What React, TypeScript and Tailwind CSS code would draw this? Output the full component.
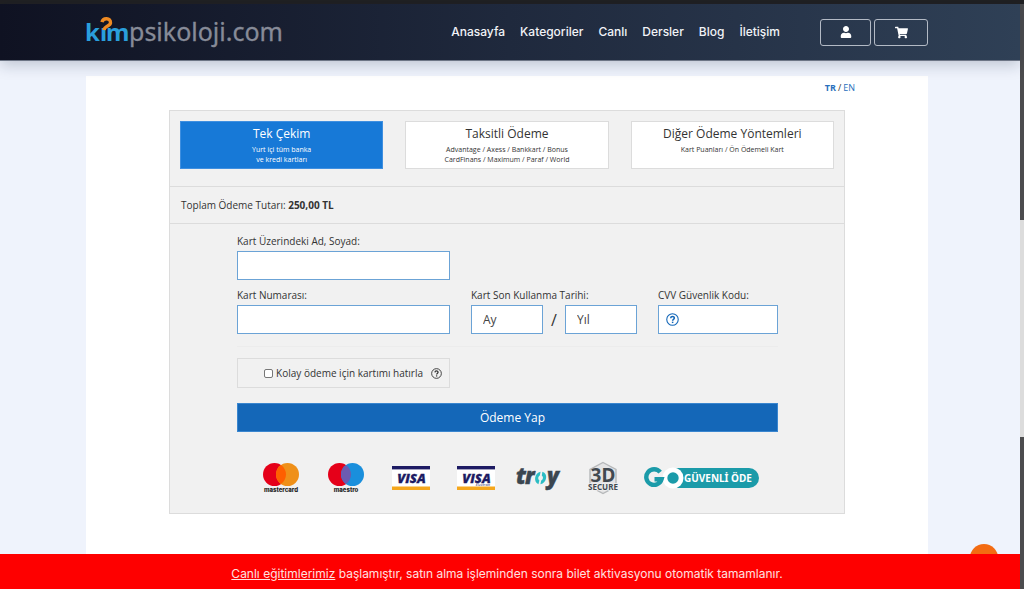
import type { ReactNode } from 'react';
import { FaShoppingCart, FaUser } from 'react-icons/fa';

const navItems = ['Anasayfa', 'Kategoriler', 'Canlı', 'Dersler', 'Blog', 'İletişim'];

const methods = [
  { title: 'Tek Çekim', lines: ['Yurt içi tüm banka', 've kredi kartları'], active: true },
  {
    title: 'Taksitli Ödeme',
    lines: ['Advantage / Axess / Bankkart / Bonus', 'CardFinans / Maximum / Paraf / World'],
    active: false,
  },
  { title: 'Diğer Ödeme Yöntemleri', lines: ['Kart Puanları / Ön Ödemeli Kart'], active: false },
];

const inputClass =
  'block h-[29px] w-full min-w-0 appearance-none border border-[#6ba3d6] bg-white px-[11px] text-[12px] text-[#444] outline-none placeholder:text-[#444] placeholder:opacity-100';

function Logo() {
  return (
    <svg width="200" height="36" viewBox="0 0 200 36" role="img" aria-label="kimpsikoloji.com">
      <g fontFamily="'Noto Sans', sans-serif">
        <g fontSize="24" fontWeight="700" fill="#2a9fdc">
          <text x="-1" y="27">k</text>
          <text x="14" y="27">ı</text>
          <text x="20" y="27">m</text>
        </g>
        <text x="43" y="27" fontSize="25" fill="#878b98" stroke="#878b98" strokeWidth="0.3">psikoloji.com</text>
      </g>
      <path d="M16 8.2C17 3.4 24.8 3.6 24.5 8.8C24.3 12.3 18.5 11.6 18 16" fill="none" stroke="#ef8a22" strokeWidth="3.4" />
    </svg>
  );
}

function HelpIcon({ className }: { className: string }) {
  return (
    <svg viewBox="0 0 12 12" className={className} fill="none" stroke="currentColor" aria-hidden="true">
      <circle cx="6" cy="6" r="5.3" strokeWidth="1" />
      <path d="M4.3 4.8C4.4 2.7 7.7 2.8 7.7 4.7C7.7 5.9 6.1 5.9 6.1 7.2" strokeWidth="1.4" />
      <path d="M6.1 8V9.3" strokeWidth="1.4" />
    </svg>
  );
}

function Circles({ label, right, overlap }: { label: string; right: string; overlap: string }) {
  return (
    <svg width="38" height="32" viewBox="0 0 38 32" role="img" aria-label={label}>
      <circle cx="12.5" cy="12.5" r="11.5" fill="#e50019" />
      <circle cx="25.5" cy="12.5" r="11.5" fill={right} />
      <path d="M19 3A11.5 11.5 0 0 1 19 22A11.5 11.5 0 0 1 19 3Z" fill={overlap} />
      <text x="19" y="30" textAnchor="middle" fontSize="6" fontWeight="800" fontFamily="Inter, sans-serif" fill="#242424">
        {label}
      </text>
    </svg>
  );
}

function Visa({ note }: { note?: string }) {
  return (
    <svg width="38" height="24" viewBox="0 0 38 24" role="img" aria-label="Visa">
      <rect width="38" height="24" fill="#fff" />
      <rect width="38" height="3.4" fill="#1d1b63" />
      <rect y="20.5" width="38" height="3.5" fill="#f5a71d" />
      <text x="19.5" y="16.5" textAnchor="middle" fontSize="13" fontWeight="800" fontStyle="italic" fontFamily="'Open Sans', sans-serif" fill="#1d1b63" stroke="#1d1b63" strokeWidth="0.3">
        VISA
      </text>
      {note && (
        <text x="33" y="19.8" textAnchor="end" fontSize="4" fontStyle="italic" fontFamily="'Open Sans', sans-serif" fill="#1d1b63">
          {note}
        </text>
      )}
    </svg>
  );
}

function Troy() {
  return (
    <svg width="46" height="34" viewBox="0 0 46 34" role="img" aria-label="troy" className="overflow-visible">
      <g fontFamily="'Open Sans', sans-serif" fontSize="22" fontWeight="800" fontStyle="italic" fill="#3b4650" stroke="#3b4650" strokeWidth="0.4">
        <text x="0" y="23">t</text>
        <text x="9" y="23">r</text>
        <text x="31" y="23">y</text>
      </g>
      <path d="M24.6 10.8C18.6 11.8 17 21.2 22.4 23.2L23.4 19.4C21.6 18.2 22.2 15.4 23.8 14.6Z" fill="#2bbcc3" />
      <path d="M26.4 10.8C32.4 12.4 31 22 24.4 23.3L25.2 19.4C27.4 18.4 27.6 15.6 25.8 14.4Z" fill="#2bbcc3" />
    </svg>
  );
}

function Secure3D() {
  return (
    <svg width="32" height="34" viewBox="0 0 32 34" role="img" aria-label="3D Secure" className="overflow-visible">
      <path d="M16 1.5L29 8.5V25.5L16 32.5L3 25.5V8.5Z" fill="#e4e4e5" stroke="#b6b8ba" strokeWidth="1.4" />
      <text x="16" y="21" textAnchor="middle" fontSize="19" fontWeight="700" fontFamily="'Noto Sans', sans-serif" fill="#414950">3D</text>
      <text x="16" y="29" textAnchor="middle" fontSize="8" fontWeight="700" fontFamily="'Noto Sans', sans-serif" fill="#414950" stroke="#f1f1f1" strokeWidth="1.5" paintOrder="stroke">
        SECURE
      </text>
    </svg>
  );
}

function GoSecure() {
  return (
    <svg width="116" height="24" viewBox="0 0 116 24" role="img" aria-label="GO Güvenli Öde">
      <path d="M30 2H105A10 10 0 0 1 105 22H30Z" fill="#1b9ba9" />
      <circle cx="29" cy="12" r="10.5" fill="#fff" />
      <circle cx="29" cy="12" r="5.7" fill="#1b9ba9" />
      <path d="M16.2 6.2A7.8 7.8 0 1 0 17.6 13.2H10.5" fill="none" stroke="#1b9ba9" strokeWidth="4.4" />
      <text x="40" y="16" fontSize="10" fontWeight="700" fontFamily="'Noto Sans', sans-serif" fill="#fff">GÜVENLİ ÖDE</text>
    </svg>
  );
}

function Field({ id, label, children }: { id: string; label: string; children: ReactNode }) {
  return (
    <div className="min-w-0">
      <label htmlFor={id} className="mb-[2px] block whitespace-nowrap text-[10px] leading-4">
        {label}
      </label>
      {children}
    </div>
  );
}

export default function App() {
  return (
    <div className="flex h-screen overflow-hidden bg-[#eff3fc] font-['Open_Sans',sans-serif] text-[#333]">
      <div className="flex min-w-0 flex-1 flex-col">
        <div className="h-1 shrink-0 bg-[#202022]" />
        <header className="z-10 flex h-[57px] shrink-0 items-center justify-between border-b border-[#6d7585] bg-linear-to-r from-[#0f1222] via-[#1f293d] to-[#2f4056] pr-[92px] pl-[86px] font-[Inter,sans-serif] shadow-[0_4px_14px_rgba(20,30,60,0.22)]">
          <a href="#" className="block">
            <Logo />
          </a>
          <div className="flex items-center">
            <nav className="mr-10 flex gap-[15px] text-[12px] font-medium text-[#f1f3f7]">
              {navItems.map((item) => (
                <a key={item} href="#">
                  {item}
                </a>
              ))}
            </nav>
            <div className="flex gap-[3px] text-white">
              <button type="button" aria-label="Hesabım" className="flex h-[27px] w-[51px] items-center justify-center rounded-[3px] border border-[#b3bac5]">
                <FaUser size={12} />
              </button>
              <button type="button" aria-label="Sepet" className="flex h-[27px] w-[54px] items-center justify-center rounded-[3px] border border-[#b3bac5]">
                <FaShoppingCart size={13} />
              </button>
            </div>
          </div>
        </header>

        <main className="relative flex min-h-0 flex-1 flex-col pt-[15px] pr-[92px] pl-[86px]">
          <div className="flex-1 bg-white px-[83px]">
            <div className="-mr-[10px] flex h-[34px] justify-end gap-[2px] pt-1 text-[9px] leading-4">
              <a href="#" className="font-bold text-[#2a70bd]">TR</a>
              <span>/</span>
              <a href="#" className="text-[#2a70bd]">EN</a>
            </div>

            <section className="border border-[#dcdcdc] bg-[#f1f1f1]">
              <div className="grid grid-cols-3 gap-[22px] border-b border-[#dcdcdc] px-[10px] pt-[10px] pb-[17px]">
                {methods.map((m) => (
                  <button
                    key={m.title}
                    type="button"
                    className={
                      m.active
                        ? 'flex h-12 flex-col items-center border border-[#3f8fe0] bg-[#1779d7] pt-1 text-white'
                        : 'flex h-12 flex-col items-center border border-[#dcdcdc] bg-white pt-1'
                    }
                  >
                    <span className="mb-[3px] text-[12px] leading-4">{m.title}</span>
                    {m.lines.map((line) => (
                      <span key={line} className="text-[7px] leading-[10px] whitespace-nowrap">
                        {line}
                      </span>
                    ))}
                  </button>
                ))}
              </div>

              <p className="border-b border-[#dcdcdc] px-[11px] py-[10px] text-[10px] leading-4">
                Toplam Ödeme Tutarı: <strong>250,00 TL</strong>
              </p>

              <form className="pt-[9px] pr-[66px] pl-[67px]" onSubmit={(e) => e.preventDefault()}>
                <div className="grid grid-cols-[213fr_166fr_120fr] gap-x-[21px] gap-y-[7px]">
                  <Field id="holder" label="Kart Üzerindeki Ad, Soyad:">
                    <input id="holder" type="text" className={inputClass} />
                  </Field>
                  <div className="col-span-2" />
                  <Field id="number" label="Kart Numarası:">
                    <input id="number" type="text" className={inputClass} />
                  </Field>
                  <Field id="month" label="Kart Son Kullanma Tarihi:">
                    <div className="flex items-center">
                      <input id="month" type="text" placeholder="Ay" className={inputClass} />
                      <span className="w-[22px] shrink-0 text-center text-[16px] leading-4 font-medium">/</span>
                      <input type="text" aria-label="Yıl" placeholder="Yıl" className={inputClass} />
                    </div>
                  </Field>
                  <Field id="cvv" label="CVV Güvenlik Kodu:">
                    <div className="flex h-[29px] items-center border border-[#6ba3d6] bg-white pl-[7px]">
                      <HelpIcon className="size-[13px] shrink-0 text-[#1467b8]" />
                      <input id="cvv" type="text" className="h-full w-full min-w-0 px-2 text-[12px] outline-none" />
                    </div>
                  </Field>
                </div>

                <hr className="mt-3 border-[#ececec]" />
                <div className="mt-[11px] grid grid-cols-[213fr_307fr] gap-x-[21px]">
                  <label className="flex h-[30px] items-center justify-end border border-[#dcdcdc] pr-[7px] text-[10px] whitespace-nowrap">
                    <input type="checkbox" className="mr-[3px] size-[9px] appearance-none rounded-[2px] border border-[#777] bg-white checked:bg-[#1467b8]" />
                    Kolay ödeme için kartımı hatırla
                    <HelpIcon className="ml-2 size-[11px]" />
                  </label>
                </div>
                <button type="submit" className="mt-[15px] block h-[29px] w-full border border-[#3a86cf] bg-[#1467b8] pl-[10px] text-[12px] leading-4 text-white">
                  Ödeme Yap
                </button>

                <div className="mt-7 flex h-[53px] items-start justify-between pr-[18px] pl-[25px]">
                  <div className="flex h-9 items-center gap-[27px]">
                    <Circles label="mastercard" right="#ef9019" overlap="#ff5f00" />
                    <Circles label="maestro" right="#1a8fdc" overlap="#6c5bb0" />
                    <Visa />
                    <Visa note="Electron" />
                  </div>
                  <div className="flex h-9 items-center gap-[25px]">
                    <Troy />
                    <Secure3D />
                    <GoSecure />
                  </div>
                </div>
              </form>
            </section>
          </div>
          <button type="button" aria-label="Yukarı çık" className="absolute right-[22px] -bottom-[18px] size-7 rounded-full bg-[#f36b12]" />
        </main>

        <footer className="z-10 flex h-[35px] shrink-0 items-center justify-center bg-[#fe0000] pt-1 pr-[6px] font-[Inter,sans-serif] text-[12px] text-[#ffe0e0]">
          <p>
            <a href="#" className="underline">Canlı eğitimlerimiz</a> başlamıştır, satın alma işleminden sonra bilet aktivasyonu otomatik tamamlanır.
          </p>
        </footer>
      </div>
      <div className="flex w-1 shrink-0 flex-col bg-[#4c4c4e]" aria-hidden="true">
        <div className="h-1 bg-[#202022]" />
        <div className="flex-[216]" />
        <div className="flex-[217] bg-[#dcdcdc]" />
        <div className="flex-[152]" />
      </div>
    </div>
  );
}
